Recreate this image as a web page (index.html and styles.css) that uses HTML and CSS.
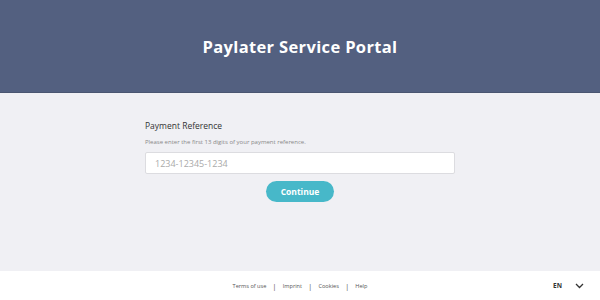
FILE: index.html
```html
<!DOCTYPE html>
<html lang="en">
<head>
    <meta charset="UTF-8">
    <meta name="viewport" content="width=device-width, initial-scale=1.0">
    <title>Paylater Service Portal</title>
    <link rel="stylesheet" href="styles.css">
</head>
<body>
    <div class="page">
        <header class="hero">
            <h1>Paylater Service Portal</h1>
        </header>

        <main class="content">
            <form class="reference-form">
                <label class="label" for="reference">Payment Reference</label>
                <p class="hint">Please enter the first 13 digits of your payment reference.</p>
                <input id="reference" class="input" type="text" placeholder="1234-12345-1234">
                <button class="btn" type="button">Continue</button>
            </form>
        </main>

        <!-- Footer links and language picker -->
        <footer class="footer">
            <nav class="footer__links">
                <a href="#">Terms of use</a>
                <span class="sep">|</span>
                <a href="#">Imprint</a>
                <span class="sep">|</span>
                <a href="#">Cookies</a>
                <span class="sep">|</span>
                <a href="#">Help</a>
            </nav>
            <div class="lang">
                <span>EN</span>
                <svg width="9" height="6" viewBox="0 0 9 6"><path d="M1 1l3.5 3.5L8 1" fill="none" stroke="#333" stroke-width="1.3"/></svg>
            </div>
        </footer>
    </div>
</body>
</html>
```

FILE: styles.css
```css
* {
    box-sizing: border-box;
}

body {
    margin: 0;
    font-family: 'Open Sans', sans-serif;
    background-color: #f0f0f4;
    color: #333;
}

.page {
    display: flex;
    flex-direction: column;
    height: 300px;
}

.hero {
    height: 93px;
    background-color: #536080;
    border-bottom: 1px solid #4a5570;
    display: flex;
    justify-content: center;
    align-items: center;
}

.hero h1 {
    margin: 0;
    color: #fff;
    font-size: 16.5px;
    font-weight: 700;
    letter-spacing: 0.35px;
    padding-top: 1px;
}

.content {
    flex: 1;
    display: flex;
    justify-content: center;
    padding-top: 27px;
}

.reference-form {
    width: 310px;
    display: flex;
    flex-direction: column;
}

.label {
    font-size: 8.5px;
    color: #333;
    line-height: 12px;
}

.hint {
    margin: 6px 0 6px;
    font-size: 6px;
    color: #888;
    line-height: 8px;
}

.input {
    height: 22px;
    border: 1px solid #dcdce0;
    border-radius: 2px;
    background: #fff;
    padding: 0 9px;
    font-family: 'Open Sans', sans-serif;
    font-size: 9px;
    color: #333;
}

.input::placeholder {
    color: #aaa;
}

.btn {
    align-self: center;
    margin-top: 7px;
    width: 68px;
    height: 21px;
    border: none;
    border-radius: 11px;
    background-color: #47b8c9;
    color: #fff;
    font-family: 'Open Sans', sans-serif;
    font-size: 8.5px;
    font-weight: 700;
    cursor: pointer;
}

.footer {
    height: 29px;
    background-color: #fff;
    display: flex;
    align-items: center;
    position: relative;
    justify-content: center;
}

.footer__links {
    display: flex;
    align-items: center;
    gap: 6px;
    font-size: 5.6px;
    color: #555;
}

.footer__links a {
    color: #555;
    text-decoration: none;
}

.footer__links .sep {
    font-size: 8px;
    color: #666;
}

.lang {
    position: absolute;
    right: 16px;
    top: 0;
    height: 29px;
    display: flex;
    align-items: center;
    gap: 13px;
    font-size: 6.5px;
    font-weight: 700;
    color: #333;
}
```
